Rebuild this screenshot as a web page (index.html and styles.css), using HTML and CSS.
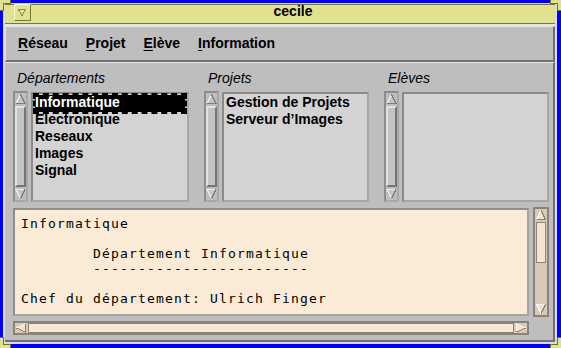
FILE: index.html
```html
<!DOCTYPE html>
<html lang="fr">
<head>
    <meta charset="UTF-8">
    <title>cecile</title>
    <link rel="stylesheet" href="styles.css">
</head>
<body>
    <svg class="defs" width="0" height="0" aria-hidden="true">
        <defs>
            <symbol id="g-up" viewBox="0 0 11 12">
                <path d="M5.5 1.5L1 10.5H10Z" fill="#c6c6c6"/>
                <path d="M1 10.5L5.5 1.5" stroke="#ececec" fill="none"/>
                <path d="M5.5 1.5L10 10.5H1" stroke="#7a7a7a" fill="none"/>
            </symbol>
            <symbol id="g-down" viewBox="0 0 11 12">
                <path d="M1 1.5H10L5.5 10.5Z" fill="#c6c6c6"/>
                <path d="M5.5 10.5L1 1.5H10" stroke="#ececec" fill="none"/>
                <path d="M10 1.5L5.5 10.5" stroke="#7a7a7a" fill="none"/>
            </symbol>
            <symbol id="t-up" viewBox="0 0 12 12">
                <path d="M6 1.5L1.5 10.5H10.5Z" fill="#efe2cf"/>
                <path d="M1.5 10.5L6 1.5" stroke="#fff8ee" fill="none"/>
                <path d="M6 1.5L10.5 10.5H1.5" stroke="#8b8378" fill="none"/>
            </symbol>
            <symbol id="t-down" viewBox="0 0 12 12">
                <path d="M1.5 1.5H10.5L6 10.5Z" fill="#efe2cf"/>
                <path d="M6 10.5L1.5 1.5H10.5" stroke="#fff8ee" fill="none"/>
                <path d="M10.5 1.5L6 10.5" stroke="#8b8378" fill="none"/>
            </symbol>
            <symbol id="t-left" viewBox="0 0 12 10">
                <path d="M1.5 5L10.5 1V9Z" fill="#efe2cf"/>
                <path d="M1.5 5L10.5 1" stroke="#fff8ee" fill="none"/>
                <path d="M10.5 1V9L1.5 5" stroke="#8b8378" fill="none"/>
            </symbol>
            <symbol id="t-right" viewBox="0 0 12 10">
                <path d="M10.5 5L1.5 1V9Z" fill="#efe2cf"/>
                <path d="M1.5 9V1L10.5 5" stroke="#fff8ee" fill="none"/>
                <path d="M10.5 5L1.5 9" stroke="#8b8378" fill="none"/>
            </symbol>
            <symbol id="corner" viewBox="0 0 11 11">
                <path d="M0 0H11V3H3V11H0Z" fill="#e0e28e"/>
                <path d="M10.5 0V3.5H3.5V10.5H0" stroke="#6e6e3c" fill="none"/>
            </symbol>
        </defs>
    </svg>

    <div class="frame">
        <svg class="corner tl" width="11" height="11"><use href="#corner"/></svg>
        <svg class="corner tr" width="11" height="11"><use href="#corner"/></svg>
        <svg class="corner bl" width="11" height="11"><use href="#corner"/></svg>
        <svg class="corner br" width="11" height="11"><use href="#corner"/></svg>

        <div class="window">
            <div class="titlebar">
                <div class="title-inner">
                    <div class="menu-btn">
                        <svg width="15" height="15" viewBox="0 0 15 15">
                            <path d="M3.5 4.5H10.5L7 10.5Z" fill="none" stroke="#8a8a52"/>
                        </svg>
                    </div>
                    <div class="title">cecile</div>
                </div>
            </div>

            <div class="menubar">
                <span class="menu"><u>R</u>éseau</span>
                <span class="menu"><u>P</u>rojet</span>
                <span class="menu"><u>E</u>lève</span>
                <span class="menu"><u>I</u>nformation</span>
            </div>

            <div class="main">
                <div class="lists">
                    <div class="col col-wide">
                        <div class="label">Départements</div>
                        <div class="pane">
                            <div class="vsb">
                                <svg class="arrow" width="11" height="12"><use href="#g-up"/></svg>
                                <div class="thumb"></div>
                                <svg class="arrow" width="11" height="12"><use href="#g-down"/></svg>
                            </div>
                            <ul class="list">
                                <li class="sel">Informatique</li>
                                <li>Electronique</li>
                                <li>Reseaux</li>
                                <li>Images</li>
                                <li>Signal</li>
                            </ul>
                        </div>
                    </div>
                    <div class="col">
                        <div class="label">Projets</div>
                        <div class="pane">
                            <div class="vsb">
                                <svg class="arrow" width="11" height="12"><use href="#g-up"/></svg>
                                <div class="thumb"></div>
                                <svg class="arrow" width="11" height="12"><use href="#g-down"/></svg>
                            </div>
                            <ul class="list">
                                <li>Gestion de Projets</li>
                                <li>Serveur d’Images</li>
                            </ul>
                        </div>
                    </div>
                    <div class="col">
                        <div class="label">Elèves</div>
                        <div class="pane">
                            <div class="vsb">
                                <svg class="arrow" width="11" height="12"><use href="#g-up"/></svg>
                                <div class="thumb"></div>
                                <svg class="arrow" width="11" height="12"><use href="#g-down"/></svg>
                            </div>
                            <ul class="list"></ul>
                        </div>
                    </div>
                </div>

                <div class="text-row">
                    <div class="textbox">
<pre class="text">Informatique

        Département Informatique
        ------------------------

Chef du département: Ulrich Finger</pre>
                    </div>
                    <div class="vsb tan">
                        <svg class="arrow" width="12" height="12"><use href="#t-up"/></svg>
                        <div class="thumb"></div>
                        <div class="trough"></div>
                        <svg class="arrow" width="12" height="12"><use href="#t-down"/></svg>
                    </div>
                </div>

                <div class="hsb">
                    <svg class="arrow" width="12" height="10"><use href="#t-left"/></svg>
                    <div class="thumb"></div>
                    <svg class="arrow" width="12" height="10"><use href="#t-right"/></svg>
                </div>
            </div>
        </div>
    </div>
</body>
</html>
```

FILE: styles.css
```css
body {
    margin: 0;
    width: 561px;
    height: 348px;
    overflow: hidden;
    background-color: #0000ff;
    font-family: "Liberation Sans", Arial, sans-serif;
    font-size: 14px;
    color: #000;
}
.defs {
    position: absolute;
}
svg {
    display: block;
    shape-rendering: crispEdges;
}

/* window manager frame */
.frame {
    position: relative;
    padding: 3px 4px 4px 3px;
}
.corner {
    position: absolute;
}
.corner.tl { left: 0; top: 0; }
.corner.tr { right: 0; top: 0; transform: scaleX(-1); }
.corner.bl { left: 0; bottom: 0; transform: scaleY(-1); }
.corner.br { right: 0; bottom: 0; transform: scale(-1, -1); }

.window {
    width: 554px;
    height: 341px;
    box-sizing: border-box;
    padding: 0 2px 2px;
    background-color: #dcdcdc;
    display: flex;
    flex-direction: column;
}
.titlebar {
    height: 23px;
    box-sizing: border-box;
    padding-top: 1px;
    background-color: #e0e28e;
    border-bottom: 2px solid #e4e4e4;
}
.title-inner {
    display: flex;
    height: 20px;
    box-sizing: border-box;
    border-top: 1px solid #77773f;
    border-bottom: 1px solid #77773f;
}
.menu-btn {
    width: 17px;
    height: 17px;
    box-sizing: border-box;
    margin: -1px 0 0 9px;
    border: 1px solid;
    border-color: #f6f6cc #75753e #75753e #f6f6cc;
}
.title {
    flex: 1;
    text-align: center;
    font-weight: bold;
    line-height: 12px;
}

/* menu bar */
.menubar {
    height: 36px;
    box-sizing: border-box;
    display: flex;
    gap: 18px;
    padding-left: 12px;
    border-top: 1px solid #e6e6e6;
    border-left: 1px solid #e6e6e6;
    border-right: 2px solid #707070;
    border-bottom: 2px solid #707070;
    background-color: #bebebe;
    font-weight: bold;
    line-height: 33px;
}
.menu u {
    text-underline-offset: 2px;
}

/* main form */
.main {
    flex: 1;
    display: flex;
    flex-direction: column;
    padding: 2px 4px 5px 8px;
    border-top: 1px solid #e6e6e6;
    border-right: 2px solid #707070;
    border-bottom: 2px solid #707070;
    background-color: #bebebe;
}
.lists {
    display: flex;
    gap: 15px;
}
.col {
    width: 165px;
}
.col-wide {
    width: 176px;
}
.label {
    height: 26px;
    line-height: 26px;
    padding-left: 4px;
    font-style: italic;
}
.pane {
    display: flex;
    gap: 3px;
    height: 111px;
}
.list {
    flex: 1;
    margin: 1px 0 0;
    padding: 1px 0 0;
    list-style: none;
    border: 2px solid;
    border-color: #8a8a8a #a6a6a6 #a6a6a6 #8a8a8a;
    background-color: #d3d3d3;
    font-weight: bold;
}
.list li {
    height: 17px;
    line-height: 14px;
    margin: 0 2px;
    white-space: nowrap;
}
.list li.sel {
    background-color: #000;
    color: #fff;
    outline: 2px dashed #000;
}

/* scrollbars */
.vsb {
    flex: none;
    width: 15px;
    box-sizing: border-box;
    display: flex;
    flex-direction: column;
    border: 2px solid;
    border-color: #8c8c8c #a8a8a8 #a8a8a8 #8c8c8c;
    background-color: #bebebe;
}
.vsb .thumb {
    flex: 1;
    margin: 1px 0;
    border: 2px solid;
    border-color: #e2e2e2 #747474 #747474 #e2e2e2;
    background-color: #c4c4c4;
}
.vsb.tan {
    width: 16px;
    border-color: #8b8378;
    background-color: #d8cab6;
}
.vsb.tan .thumb {
    flex: none;
    height: 39px;
    margin: 1px 1px 0;
    border: 1px solid #8b8378;
    background-color: #f3e5d1;
}
.vsb.tan .trough {
    flex: 1;
}

.text-row {
    display: flex;
    gap: 4px;
    height: 110px;
    margin-top: 5px;
}
.textbox {
    flex: 1;
    margin: 1px 0;
    border: 2px solid;
    border-color: #8e8e8e #a4a4a4 #a4a4a4 #8e8e8e;
    background-color: #faebd7;
    overflow: hidden;
}
.text {
    margin: 0;
    padding: 6px 0 0 6px;
    font-family: "DejaVu Sans Mono", monospace;
    font-size: 13px;
    letter-spacing: 1.17px;
    line-height: 15px;
}

.hsb {
    width: 516px;
    height: 14px;
    box-sizing: border-box;
    margin-top: 4px;
    display: flex;
    border: 2px solid #8b8378;
    background-color: #d8cab6;
}
.hsb .thumb {
    flex: 1;
    margin: 0 1px;
    border: 1px solid #8b8378;
    background-color: #f7e9d5;
}
```
